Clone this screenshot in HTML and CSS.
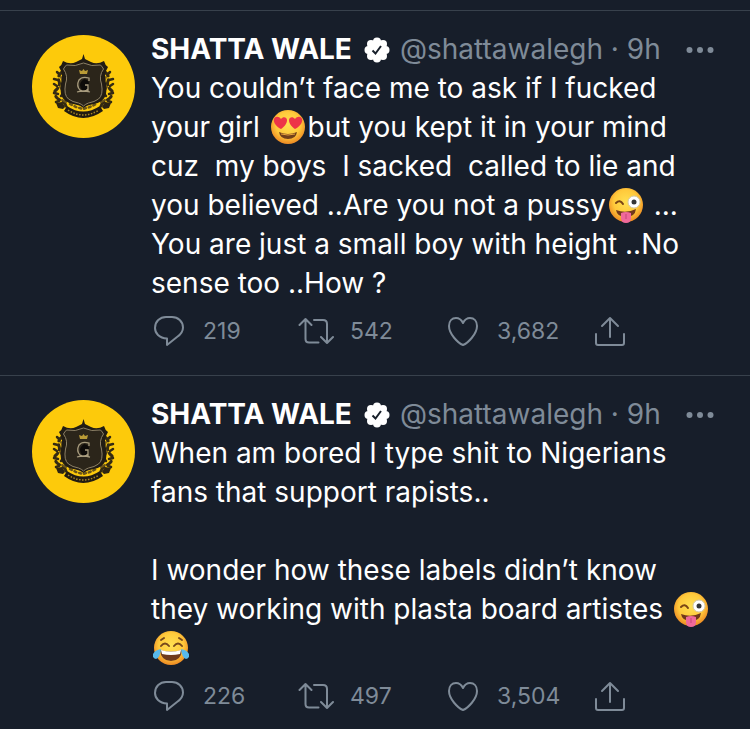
FILE: index.html
```html
<!DOCTYPE html>
<html lang="en">
<head>
<meta charset="utf-8">
<meta name="viewport" content="width=device-width, initial-scale=1">
<title>Timeline</title>
<link rel="stylesheet" href="styles.css">
</head>
<body>
<svg class="sprite" aria-hidden="true">
  <defs>
    <radialGradient id="face" cx="50%" cy="42%" r="56%">
      <stop offset="0" stop-color="#ffe052"/>
      <stop offset=".65" stop-color="#ffc93b"/>
      <stop offset="1" stop-color="#ee8e25"/>
    </radialGradient>
  </defs>
  <symbol id="crest" viewBox="0 0 103 103">
    <circle cx="51.500" cy="51.500" r="51.500" fill="#fdca0b"/>
    <g fill="none" stroke="#352b13" stroke-linecap="round">
      <path d="M30 37q-5 4-3 9t-4 10q-1 6 5 9t6 7M73 37q5 4 3 9t4 10q1 6-5 9t-6 7" stroke-width="3" stroke-dasharray="5 4"/>
      <path d="M27 39l-2-2M26 45l-4-1M25 51l-3-2M22 58l4 1M29 61l3-3M27 66l-3 1M76 39l2-2M77 45l4-1M78 51l3-2M81 58l-4 1M74 61l-3-3M76 66l3 1" stroke-width="2.500"/>
      <path d="M29 42l2 5M28 52l2 3M30 65l4 2M74 42l-2 5M75 52l-2 3M73 65l-4 2" stroke="#6b551a" stroke-width="2"/>
      <path d="M38 69l6 3 7 2 7-2 6-3" stroke="#6b551a" stroke-width="2.500" stroke-dasharray="2 3"/>
    </g>
    <path d="M51.500 19l1.500 5 6 3q6 3 13-1 1 4 4 6-5 8-2 16 1 6 0 11-2 8-12 10-7 1-10.500 4-3.500-3-10.500-4-10-2-12-10-1-5 0-11 3-8-2-16 3-2 4-6 7 4 13 1l6-3z" fill="#211c14"/>
    <path d="M51.500 28q-8 4-17 2-2 2-3 4 5 7 2 15-2 11 3 15 4 3 10 4 3 1 5 3 2-2 5-3 6-1 10-4 5-4 3-15-3-8 2-15-1-2-3-4-9 2-17-2z" fill="#2b251a" stroke="#8c8066" stroke-width="1"/>
    <path d="M48 39l-1-4 3 1 1.500-2 1.500 2 3-1-1 4z" fill="#b99b36"/>
    <path d="M52 44q6 1 5 7t-6 5q-3-3-3-6t4-6z" fill="#0d0b09"/>
    <path d="M57 46v-3q-7-2-10 2-3 6 1 10 5 3 8-1v-4h-3M56 50v6M45 57q6-2 13 0" fill="none" stroke="#a79b7d" stroke-width="1.300"/>
    <path d="M24 68l6-1 3 5-2 2-5-1zM79 68l-6-1-3 5 2 2 5-1z" fill="#2d2412"/>
    <path d="M35 71q16 11 33 0l3 5q-20 14-39 0z" fill="#211b12"/>
    <path d="M36 75q15 10 31 0" fill="none" stroke="#a98724" stroke-width="1.500" stroke-dasharray="1.500 1.500"/>
  </symbol>
  <symbol id="verified" viewBox="0 0 26 26">
    <g fill="#fff"><circle cx="13" cy="13" r="10"/><circle cx="13" cy="4.500" r="4"/><circle cx="19" cy="7" r="4"/><circle cx="21.500" cy="13" r="4"/><circle cx="19" cy="19" r="4"/><circle cx="13" cy="21.500" r="4"/><circle cx="7" cy="19" r="4"/><circle cx="4.500" cy="13" r="4"/><circle cx="7" cy="7" r="4"/></g>
    <path d="M8.500 13.500l3 3 5.500-7.500" fill="none" stroke="#171f2a" stroke-width="2"/>
  </symbol>
  <symbol id="more" viewBox="0 0 28 8"><circle cx="3.500" cy="4" r="3"/><circle cx="14" cy="4" r="3"/><circle cx="24.500" cy="4" r="3"/></symbol>
  <symbol id="reply" viewBox="0 0 36 36"><path d="M16 25.500C8 25 4 20 4 15 4 8.500 9 4 15 4h6c6 0 11 4.500 11 10.500 0 5-3 7.500-6 9.500l-10 8z"/></symbol>
  <symbol id="repost" viewBox="0 0 36 36"><path d="M1.500 12L7.500 6l6 6M7.500 7v19q0 3.500 3.500 3.500h9.500M16 7h9q4 0 4 4v18M23 24l6 6 6-6"/></symbol>
  <symbol id="like" viewBox="0 0 36 36"><path d="M18 32C13 30 4 21 4 13 4 8 7 5 11 5c3 0 5.500 2 7 5 1.500-3 4-5 7-5 4 0 7 3 7 8 0 8-9 17-14 19z"/></symbol>
  <symbol id="share" viewBox="0 0 36 36"><path d="M18 24V5M10 13l8-8 8 8M4 21v9q0 2 2 2h24q2 0 2-2v-9"/></symbol>
  <symbol id="love" viewBox="0 0 36 36">
    <circle cx="18" cy="18" r="17" fill="url(#face)"/>
    <g fill="#ed3548"><path d="M11 20C7 18 3 14 4 10c1-3 5-3 7 0 2-3 6-2 6 1 0 4-3 7-6 9z"/><path d="M25 20c4-2 8-6 7-10-1-3-5-3-7 0-2-3-6-2-6 1 0 4 3 7 6 9z"/></g>
    <path d="M9 23q9 4 18 0-1 7-9 7t-9-7z" fill="#70401a"/>
    <path d="M11 25q7 2 14 0" fill="none" stroke="#e7a33c"/>
  </symbol>
  <symbol id="wink" viewBox="0 0 36 36">
    <circle cx="18" cy="18" r="17" fill="url(#face)"/>
    <path d="M8 16q4-4 7 1" fill="none" stroke="#7b4615" stroke-width="2" stroke-linecap="round"/>
    <circle cx="26" cy="15" r="6" fill="#fff" stroke="#d3c9aa"/><circle cx="26" cy="15" r="2.500" fill="#343537"/>
    <path d="M8 23q10 4 20-1-1 8-10 8T8 23z" fill="#71371b"/>
    <path d="M13 26q5-2 10 0v5q0 5-5 5t-5-5z" fill="#f0699a"/><path d="M18 27v5" stroke="#c64578"/>
  </symbol>
  <symbol id="joy" viewBox="0 0 36 36">
    <circle cx="18" cy="18" r="17" fill="url(#face)"/>
    <path d="M8 16q4-5 8 0M21 16q4-5 8 0M8 10l3-2M26 8l3 2" fill="none" stroke="#77481c" stroke-width="2" stroke-linecap="round"/>
    <path d="M7 20q11 3 22 0-1 11-11 11T7 20z" fill="#6f3b1e"/><path d="M8 20q10 3 20 0l-1 4q-9 2-18 0z" fill="#fff"/>
    <g fill="#58b9eb"><path d="M8 19q-1 9-5 10-4-1-3-5 2-4 8-5zM28 19q1 9 5 10 4-1 3-5-2-4-8-5z"/></g>
  </symbol>
</svg>

<main class="timeline">
  <article class="tweet">
    <svg class="avatar" role="img" aria-label="SHATTA WALE"><use href="#crest"/></svg>
    <div class="content">
      <header class="head">
        <a class="name" href="#">SHATTA WALE</a>
        <svg class="badge" role="img" aria-label="Verified"><use href="#verified"/></svg>
        <span class="meta"><a href="#">@shattawalegh</a> · <time>9h</time></span>
        <button class="more" aria-label="More"><svg><use href="#more"/></svg></button>
      </header>
      <p class="text">You couldn’t face me to ask if I fucked
your girl <svg class="emoji" role="img" aria-label="😍"><use href="#love"/></svg>but you kept it in your mind
cuz  my boys  I sacked  called to lie and
you believed ..Are you not a pussy<svg class="emoji" role="img" aria-label="😜"><use href="#wink"/></svg> ...
You are just a small boy with height ..No
sense too ..How ?</p>
      <footer class="actions">
        <button class="action" aria-label="Reply, 219"><svg><use href="#reply"/></svg>219</button>
        <button class="action" aria-label="Retweet, 542"><svg><use href="#repost"/></svg>542</button>
        <button class="action" aria-label="Like, 3,682"><svg><use href="#like"/></svg>3,682</button>
        <button class="action" aria-label="Share"><svg><use href="#share"/></svg></button>
      </footer>
    </div>
  </article>

  <article class="tweet">
    <svg class="avatar" role="img" aria-label="SHATTA WALE"><use href="#crest"/></svg>
    <div class="content">
      <header class="head">
        <a class="name" href="#">SHATTA WALE</a>
        <svg class="badge" role="img" aria-label="Verified"><use href="#verified"/></svg>
        <span class="meta"><a href="#">@shattawalegh</a> · <time>9h</time></span>
        <button class="more" aria-label="More"><svg><use href="#more"/></svg></button>
      </header>
      <p class="text">When am bored I type shit to Nigerians
fans that support rapists..

I wonder how these labels didn’t know
they working with plasta board artistes <svg class="emoji" role="img" aria-label="😜"><use href="#wink"/></svg>
<svg class="emoji" role="img" aria-label="😂"><use href="#joy"/></svg></p>
      <footer class="actions">
        <button class="action" aria-label="Reply, 226"><svg><use href="#reply"/></svg>226</button>
        <button class="action" aria-label="Retweet, 497"><svg><use href="#repost"/></svg>497</button>
        <button class="action" aria-label="Like, 3,504"><svg><use href="#like"/></svg>3,504</button>
        <button class="action" aria-label="Share"><svg><use href="#share"/></svg></button>
      </footer>
    </div>
  </article>
</main>
</body>
</html>
```
FILE: styles.css
```css
* { box-sizing: border-box; }

body {
  margin: 0;
  background: #171e2a;
  color: #fff;
  font: 28px/39px Inter, "Liberation Sans", sans-serif;
}

.sprite { position: absolute; width: 0; height: 0; }

.timeline { padding-top: 10px; }

.tweet {
  display: flex;
  align-items: flex-start;
  gap: 16px;
  padding: 19px 36px 26px 32px;
  border-top: 1px solid #38414c;
}
.tweet:last-child { padding-bottom: 14px; }

.avatar { flex: none; width: 103px; height: 103px; margin-top: 5px; }

.content { flex: 1; min-width: 0; }

.head { display: flex; align-items: center; white-space: nowrap; }
.head a { color: inherit; text-decoration: none; }
.name { font-weight: 700; }
.badge { width: 26px; height: 26px; margin: 0 10px 0 12px; }
.meta { color: #7f8b98; }

button {
  padding: 0;
  border: 0;
  background: none;
  color: #7f8b98;
  font: inherit;
  cursor: pointer;
}

.more { display: flex; margin-left: auto; }
.more svg { width: 28px; height: 8px; fill: currentColor; }

.text { margin: 0; white-space: pre; }
.emoji { width: 36px; height: 36px; margin: -4px 2px; vertical-align: -4px; }

.actions {
  display: grid;
  grid-template-columns: repeat(4, 147px);
  margin-top: 10px;
}
.action { display: flex; align-items: center; gap: 16px; font-size: 23px; line-height: 36px; }
.action svg {
  width: 36px;
  height: 36px;
  fill: none;
  stroke: currentColor;
  stroke-width: 2;
  stroke-linecap: round;
  stroke-linejoin: round;
}
```
